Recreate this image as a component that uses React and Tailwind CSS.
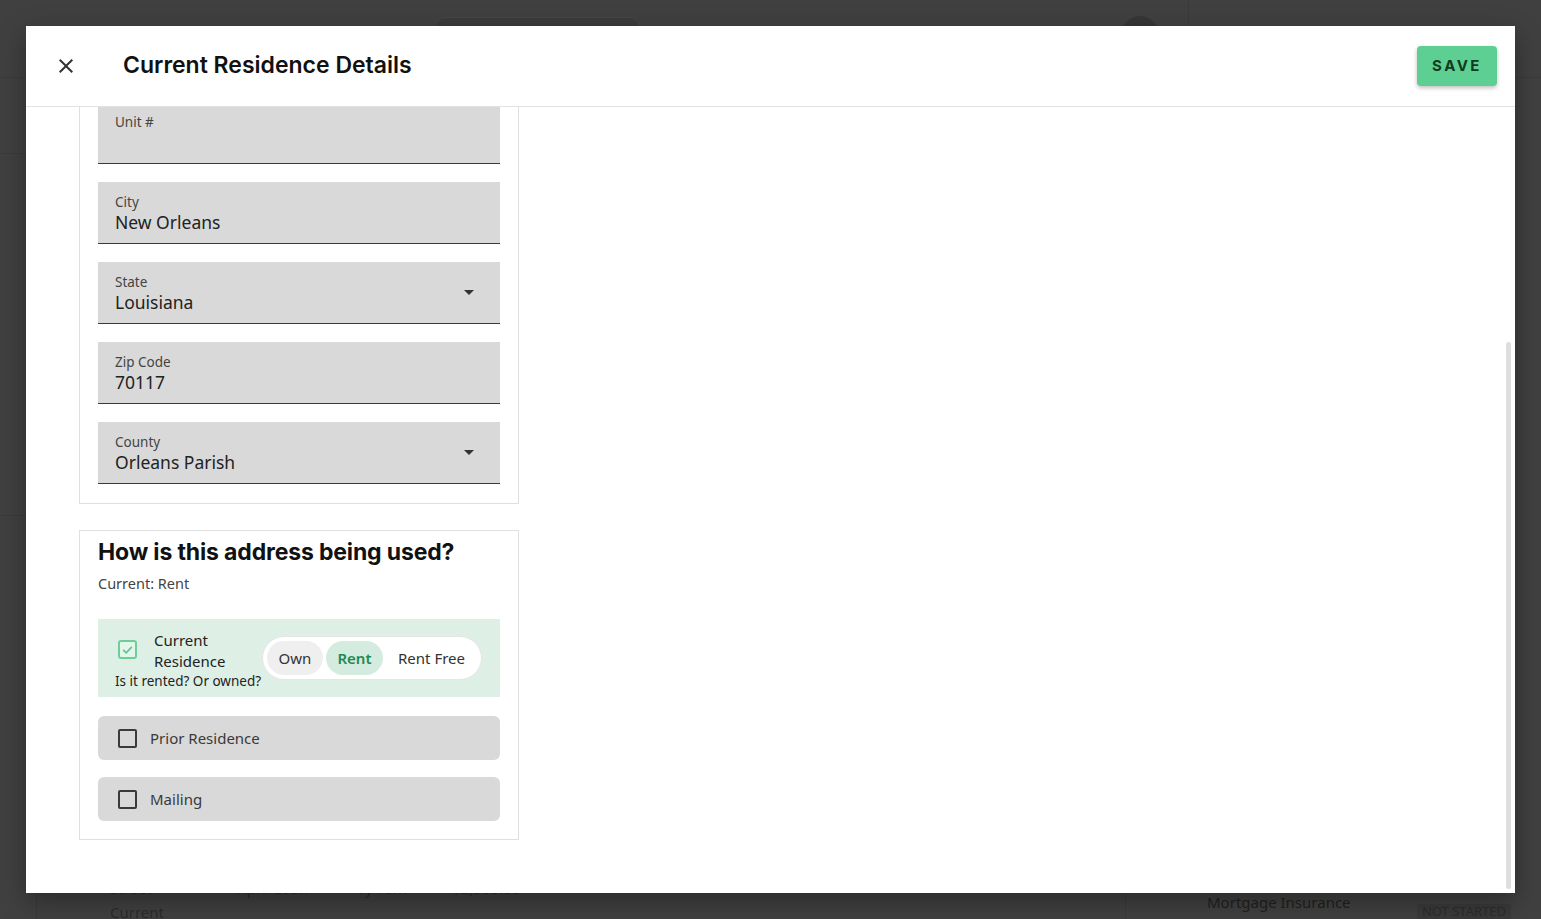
import React from "react";

const body = { fontFamily: '"Noto Sans", "Open Sans", sans-serif' };
const head = { fontFamily: 'Inter, "Noto Sans", sans-serif' };

function Arrow() {
  return (
    <svg width="10" height="5" viewBox="0 0 10 5" className="shrink-0">
      <path d="M0 0 L10 0 L5 5 Z" fill="#333" />
    </svg>
  );
}

function Field({ label, value, select }) {
  return (
    <div className="h-[62px] bg-[#d9d9d9] border-b border-[#3a3a3a] pl-[17px] pr-[26px] flex items-center">
      <div className="flex-1 flex flex-col pt-[2px]">
        <span className="text-[13.5px] leading-[16px] text-[#444]">{label}</span>
        <span className="text-[17.5px] leading-[24px] text-[#222] h-[24px]">{value}</span>
      </div>
      {select && <Arrow />}
    </div>
  );
}

function EmptyBox() {
  return <span className="w-[19px] h-[19px] rounded-[2px] border-2 border-[#3a3a3a] shrink-0" />;
}

function CheckRow({ label }) {
  return (
    <div className="h-[44px] rounded-[6px] bg-[#d9d9d9] flex items-center pl-[20px] gap-[13px]">
      <EmptyBox />
      <span className="text-[15px] text-[#3a3a3a]">{label}</span>
    </div>
  );
}

export default function App() {
  return (
    <div className="relative w-full h-screen overflow-hidden bg-[#404040]" style={body}>
      {/* underlying page, dimmed */}
      <div className="flex flex-col h-full">
        <div className="h-[78px] border-b border-[#3a3a3a] flex items-start shrink-0">
          <div className="ml-[435px] mt-[17px] w-[205px] h-[16px] rounded-t-[10px] border border-[#474747] bg-[#3c3c3c]" />
          <div className="ml-[482px] mt-[16px] w-[36px] h-[36px] rounded-full bg-[#363636]" />
          <div className="ml-[30px] w-px h-[78px] bg-[#3a3a3a]" />
        </div>
        <div className="flex-1 flex">
          <div className="flex-1 flex flex-col">
            <div className="h-[76px] border-b border-[#3a3a3a]" />
            <div className="h-[362px] border-b border-[#3a3a3a]" />
            <div className="flex-1 ml-[36px] border-l border-[#3a3a3a] flex flex-col justify-end">
              <div className="flex text-[15px] text-[#2b2b2b] pl-[73px] h-[24px] items-end">
                <span className="w-[127px]">Street</span>
                <span className="w-[120px]">April Loan</span>
                <span className="w-[95px]">Ty Tom</span>
                <span>$2,500.00</span>
              </div>
              <div className="pl-[73px] text-[15px] text-[#2b2b2b] h-[20px] leading-[26px]">Current</div>
            </div>
          </div>
          <div className="w-[416px] border-l border-[#3a3a3a] flex flex-col justify-end">
            <div className="flex items-end justify-between pl-[81px] pr-[30px]">
              <span className="text-[15px] text-[#202020] mb-[6px]">Mortgage Insurance</span>
              <span className="text-[13px] text-[#2c2c2c] bg-[#3a3a3a] px-[5px] leading-[15px] h-[15px]">NOT STARTED</span>
            </div>
          </div>
        </div>
      </div>

      {/* modal */}
      <div className="absolute top-[26px] left-[26px] w-[1489px] h-[867px] bg-white flex flex-col shadow-[0_8px_24px_rgba(0,0,0,0.35)]">
        <div className="h-[81px] shrink-0 border-b border-[#e2e2e2] flex items-center pl-[28px] pr-[18px]">
          <svg width="24" height="24" viewBox="0 0 24 24" className="shrink-0">
            <path d="M19 6.41 17.59 5 12 10.59 6.41 5 5 6.41 10.59 12 5 17.59 6.41 19 12 13.41 17.59 19 19 17.59 13.41 12z" fill="#333" />
          </svg>
          <h1 className="ml-[45px] text-[23px] font-semibold text-[#111] tracking-[0px] -mt-[2px]" style={head}>
            Current Residence Details
          </h1>
          <button className="ml-auto w-[80px] h-[40px] rounded-[4px] bg-[#5ecf92] text-[#0f3b22] text-[15px] font-bold tracking-[2.5px] shadow-[0_2px_4px_rgba(0,0,0,0.25)]" style={head}>
            SAVE
          </button>
        </div>

        <div className="relative flex-1 overflow-hidden">
          <div className="-mt-[6px] pl-[53px] w-[493px] flex flex-col gap-[26px]">
            <div className="border border-[#e0e0e0] px-[18px] pb-[19px] flex flex-col gap-[18px]">
              <Field label="Unit #" value="" />
              <Field label="City" value="New Orleans" />
              <Field label="State" value="Louisiana" select />
              <Field label="Zip Code" value="70117" />
              <Field label="County" value="Orleans Parish" select />
            </div>

            <div className="border border-[#e0e0e0] px-[18px] pt-[6px] pb-[18px] flex flex-col">
              <h2 className="text-[23px] font-bold text-[#111] leading-[30px] tracking-[-0.15px]" style={head}>
                How is this address being used?
              </h2>
              <p className="text-[14.5px] text-[#444] mt-[6px] leading-[20px]">Current: Rent</p>

              <div className="mt-[26px] h-[78px] bg-[#def0e6] flex items-center pl-[17px] pr-[18px]">
                <div className="flex flex-col w-[147px] pt-[4px]">
                  <div className="flex items-start">
                    <span className="mt-[10px] ml-[3px] w-[19px] h-[19px] rounded-[3px] border-2 border-[#6ccf98] bg-[#e6f5ec] flex items-center justify-center shrink-0">
                      <svg width="13" height="13" viewBox="0 0 24 24">
                        <path d="M4 12.5 9.5 18 20 7" fill="none" stroke="#5fc58d" strokeWidth="3.2" />
                      </svg>
                    </span>
                    <span className="ml-[17px] text-[15px] leading-[21px] text-[#222]">Current<br />Residence</span>
                  </div>
                  <span className="text-[13.5px] leading-[18px] text-[#222] whitespace-nowrap">Is it rented? Or owned?</span>
                </div>
                <div className="w-[220px] h-[44px] rounded-full bg-white border border-[#e6e6e6] flex items-center px-[4px] gap-[3px] text-[15px]">
                  <span className="w-[56px] h-[34px] rounded-full bg-[#efefef] flex items-center justify-center text-[#333]">Own</span>
                  <span className="w-[57px] h-[34px] rounded-full bg-[#d4ece0] flex items-center justify-center text-[#1e8a50] font-semibold">Rent</span>
                  <span className="flex-1 h-[34px] flex items-center justify-center text-[#333]">Rent Free</span>
                </div>
              </div>

              <div className="mt-[19px] flex flex-col gap-[17px]">
                <CheckRow label="Prior Residence" />
                <CheckRow label="Mailing" />
              </div>
            </div>
          </div>

          <div className="absolute right-[4px] top-[235px] bottom-[4px] w-[5px] rounded-full bg-[#dedede]" />
        </div>
      </div>
    </div>
  );
}
